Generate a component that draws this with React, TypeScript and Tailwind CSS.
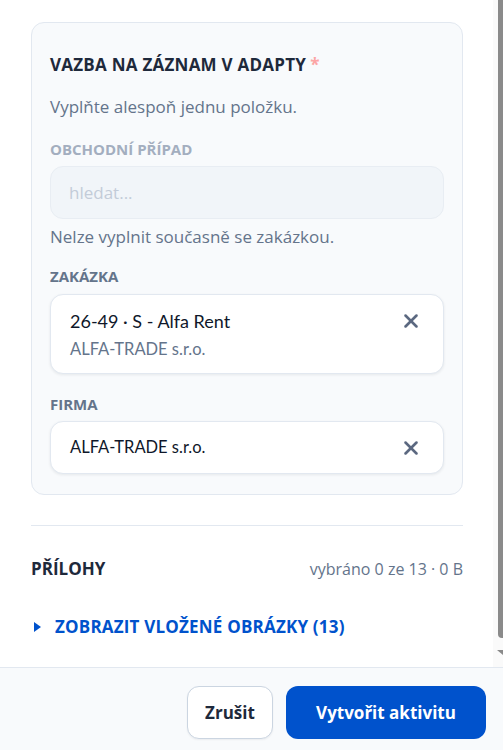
import React from 'react';
import { X } from 'lucide-react';

const Label: React.FC<{ children: React.ReactNode; muted?: boolean; className?: string }> = ({ children, muted, className = '' }) => (
  <div
    className={`text-[15px] leading-[20px] font-bold uppercase ${muted ? 'text-[#a3aebf]' : 'text-[#64748b]'} ${className}`}
  >
    {children}
  </div>
);

const ClearButton: React.FC = () => (
  <button className="flex items-center justify-center w-6 h-6 text-[#5b6880]">
    <X size={22} strokeWidth={2.8} />
  </button>
);

export default function App() {
  return (
    <div className="w-[503px] h-[750px] flex flex-col bg-white font-['Open_Sans',sans-serif] overflow-hidden">
      {/* Scrollovaná oblast */}
      <div className="flex flex-1 min-h-0">
        <div className="flex-1 pt-[22px] pl-[31px] pr-[30px]">
          <div className="rounded-[13px] border border-[#e2e8f0] bg-[#f8fafc] px-[18px] pt-[30px] pb-[20px]">
            <div className="text-[17px] leading-[24px] font-bold text-[#1e293b] tracking-[0.25px]">
              VAZBA NA ZÁZNAM V ADAPTY<span className="ml-[4px] text-[#fca5a5]">*</span>
            </div>
            <div className="mt-[18px] text-[17px] leading-[24px] text-[#64748b]">Vyplňte alespoň jednu položku.</div>

            <Label muted className="mt-[20px]">Obchodní případ</Label>
            <div className="mt-[7px] h-[53px] rounded-[13px] border border-[#e8edf3] bg-[#f1f5f9] flex items-center px-[18px]">
              <span className="text-[17px] text-[#c3ccd8]">hledat...</span>
            </div>
            <div className="mt-[6px] text-[17px] leading-[24px] text-[#64748b]">Nelze vyplnit současně se zakázkou.</div>

            <Label className="mt-[17px]">Zakázka</Label>
            <div className="mt-[8px] h-[80px] rounded-[13px] border border-[#e2e8f0] bg-white shadow-[0_1px_3px_rgba(15,23,42,0.08)] flex items-center pl-[19px] pr-[20px]">
              <div className="flex-1 font-['Lato',sans-serif]">
                <div className="text-[18px] leading-[24px] text-[#0f172a]">26-49 · S - Alfa Rent</div>
                <div className="mt-[5px] text-[16.5px] leading-[22px] text-[#64748b]">ALFA-TRADE s.r.o.</div>
              </div>
              <div className="self-start mt-[14px]">
                <ClearButton />
              </div>
            </div>

            <Label className="mt-[20px]">Firma</Label>
            <div className="mt-[7px] h-[53px] rounded-[13px] border border-[#e2e8f0] bg-white shadow-[0_1px_3px_rgba(15,23,42,0.08)] flex items-center pl-[19px] pr-[20px]">
              <div className="flex-1 font-['Lato',sans-serif] text-[16.5px] text-[#0f172a]">ALFA-TRADE s.r.o.</div>
              <ClearButton />
            </div>
          </div>

          <div className="mt-[30px] h-px bg-[#e2e8f0]" />

          <div className="mt-[31px] flex items-center justify-between">
            <div className="text-[17px] leading-[24px] font-bold text-[#1e293b]">PŘÍLOHY</div>
            <div className="text-[16px] leading-[24px] text-[#64748b]">vybráno 0 ze 13 · 0 B</div>
          </div>

          <button className="mt-[34px] flex items-center h-[24px] text-[#0052cc]">
            <svg width="7" height="10" viewBox="0 0 7 10" className="ml-[3px] mr-[14px]">
              <path d="M0 0 L7 5 L0 10 Z" fill="currentColor" />
            </svg>
            <span className="text-[17px] leading-[24px] font-bold tracking-[0.2px]">ZOBRAZIT VLOŽENÉ OBRÁZKY (13)</span>
          </button>
        </div>

        {/* Posuvník */}
        <div className="w-[10px] bg-[#fafafa] flex flex-col items-end">
          <div className="w-[5px] h-[638px] bg-[#8a8a8a] rounded-bl-[4px]" />
          <svg width="6" height="5" viewBox="0 0 6 5" className="mt-[12px]">
            <path d="M0 0 L6 0 L6 5 Z" fill="#8a8a8a" />
          </svg>
        </div>
      </div>

      {/* Patička */}
      <div className="h-[83px] shrink-0 border-t border-[#e2e8f0] bg-[#f8fafc] flex justify-end gap-[13px] pt-[18px] pr-[17px]">
        <button className="w-[86px] h-[53px] rounded-[12px] border border-[#cbd5e1] bg-white text-[17px] font-bold text-[#1e293b] shadow-[0_1px_2px_rgba(15,23,42,0.06)]">
          Zrušit
        </button>
        <button className="w-[200px] h-[53px] rounded-[12px] bg-[#0052cc] text-[17px] font-bold text-white">
          Vytvořit aktivitu
        </button>
      </div>
    </div>
  );
}
